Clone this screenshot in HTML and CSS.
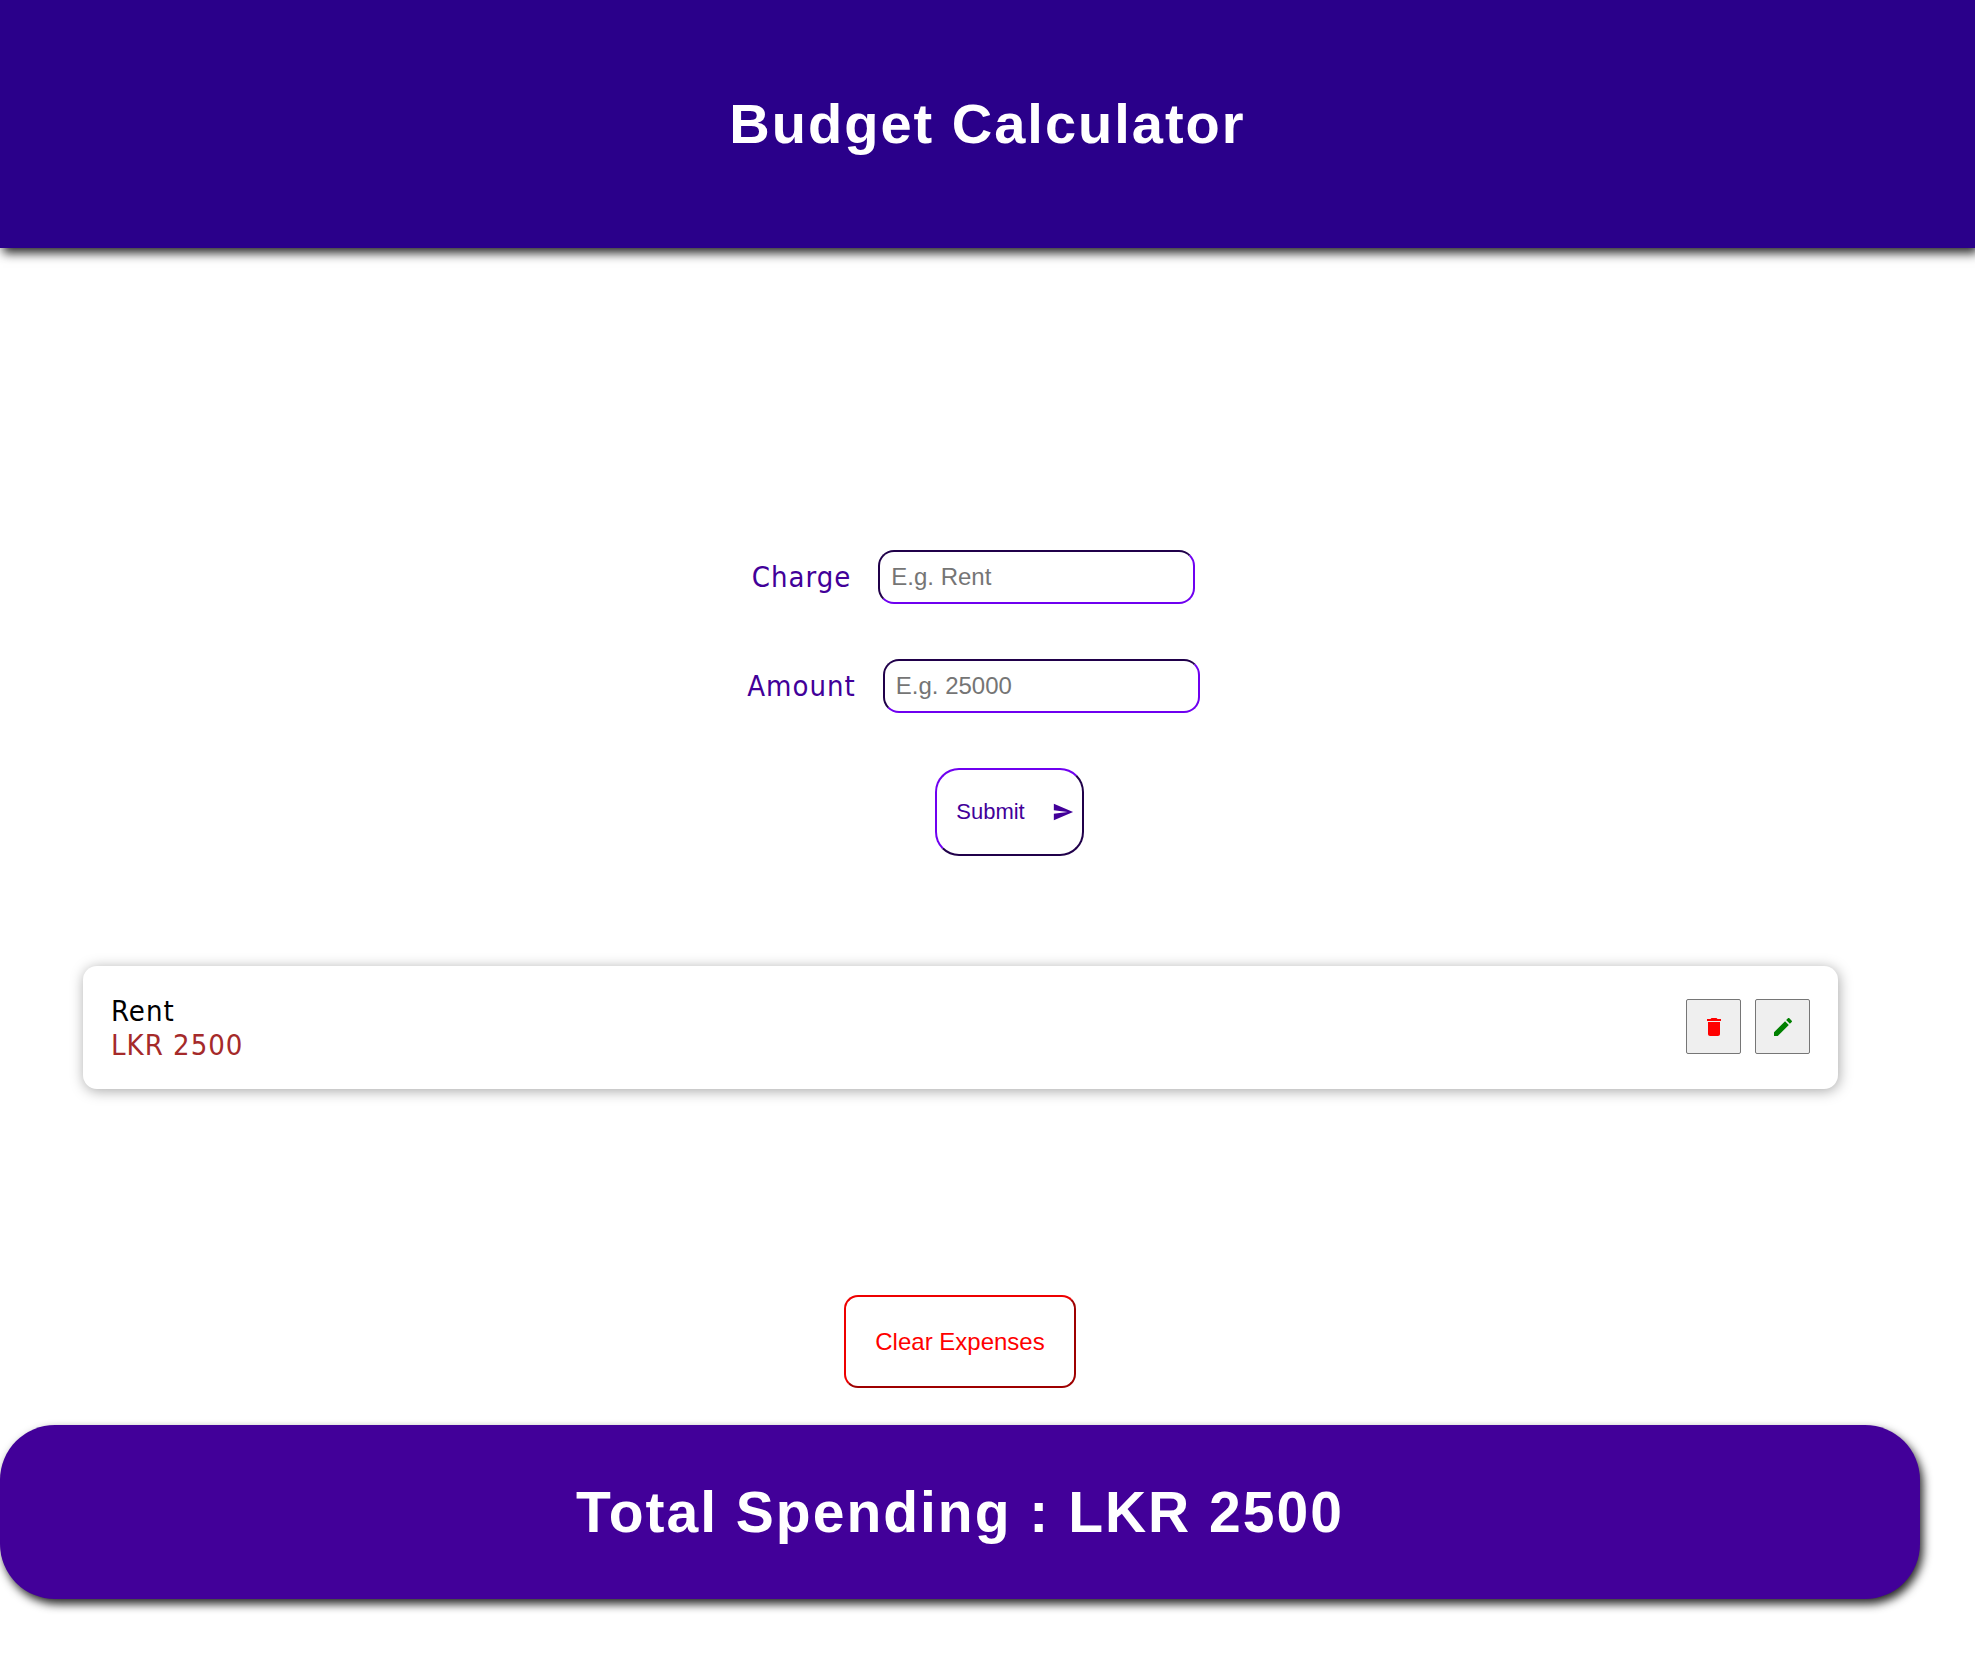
FILE: index.html
```html
<!DOCTYPE html>
<html lang="en">
<head>
  <meta charset="utf-8">
  <meta name="viewport" content="width=device-width, initial-scale=1">
  <title>Budget Calculator</title>
  <link rel="stylesheet" href="styles.css">
</head>
<body>
  <header class="header">
    <h1 class="title">Budget Calculator</h1>
  </header>
  <main class="main">
    <form class="form">
      <div class="field">
        <label for="charge">Charge</label>
        <input class="input" id="charge" type="text" placeholder="E.g. Rent">
      </div>
      <div class="field">
        <label for="amount">Amount</label>
        <input class="input" id="amount" type="text" inputmode="numeric" placeholder="E.g. 25000">
      </div>
      <button class="submit" type="submit">
        Submit
        <svg class="icon" viewBox="0 0 24 24" aria-hidden="true"><path d="M2.01 21L23 12 2.01 3 2 10l15 2-15 2z"/></svg>
      </button>
    </form>
    <ul class="expenses">
      <li class="expense">
        <div class="details">
          <span>Rent</span>
          <span class="cost">LKR 2500</span>
        </div>
        <div class="actions">
          <button class="action delete" type="button" aria-label="Delete">
            <svg class="action-icon" viewBox="0 0 24 24" aria-hidden="true"><path d="M6 19c0 1.1.9 2 2 2h8c1.1 0 2-.9 2-2V7H6v12zM19 4h-3.500l-1-1h-5l-1 1H5v2h14V4z"/></svg>
          </button>
          <button class="action edit" type="button" aria-label="Edit">
            <svg class="action-icon" viewBox="0 0 24 24" aria-hidden="true"><path d="M3 17.250V21h3.750L17.810 9.940l-3.750-3.750L3 17.250zM20.710 7.040c.39-.39.39-1.020 0-1.410l-2.340-2.340c-.39-.39-1.020-.39-1.410 0l-1.830 1.830 3.750 3.750 1.830-1.830z"/></svg>
          </button>
        </div>
      </li>
    </ul>
    <button class="clear" type="button">Clear Expenses</button>
  </main>
  <footer class="total">
    <h2 class="total-text">Total Spending : LKR 2500</h2>
  </footer>
</body>
</html>
```
FILE: styles.css
```css
* {
  box-sizing: border-box;
}

body {
  margin: 0;
  background: #fff;
  font-family: Tahoma, "DejaVu Sans Condensed", "DejaVu Sans", sans-serif;
  font-size: 29px;
  line-height: 34px;
  letter-spacing: 1px;
}

button,
input {
  font-family: Arial, "Liberation Sans", sans-serif;
}

.header {
  padding: 92px 0;
  background: #2a008a;
  text-align: center;
  box-shadow: 3px 5px 10px rgba(0, 0, 0, 0.85);
}

.title,
.total-text {
  margin: 0;
  color: #fff;
  font-family: Arial, "Liberation Sans", sans-serif;
  font-weight: bold;
  line-height: 64px;
  letter-spacing: 2px;
}

.title {
  font-size: 56px;
}

.total-text {
  font-size: 57px;
}

.main {
  display: flex;
  flex-direction: column;
  align-items: center;
}

.form {
  display: flex;
  flex-direction: column;
  align-items: center;
  gap: 55px;
  margin-top: 302px;
  color: #420099;
}

.field {
  display: flex;
  align-items: center;
  gap: 27px;
  margin-right: 28px;
}

.input {
  width: 317px;
  height: 54px;
  padding: 0 11px;
  border: 2px solid;
  border-color: #20004a #6f00f0 #6f00f0 #20004a;
  border-radius: 16px;
  background: #fff;
  font-size: 24px;
}

.input::placeholder {
  color: #757575;
}

.icon {
  width: 22px;
  height: 22px;
  fill: currentColor;
}

.submit {
  display: flex;
  align-items: center;
  gap: 27px;
  height: 88px;
  margin-left: 44px;
  padding: 0 8px 0 19px;
  border: 2px solid;
  border-color: #6f00f0 #20004a #20004a #6f00f0;
  border-radius: 24px;
  background: #fff;
  color: #420099;
  font-size: 22px;
}

.expenses {
  align-self: stretch;
  margin: 110px 137px 0 83px;
  padding: 0;
  list-style: none;
}

.expense {
  display: flex;
  align-items: flex-start;
  justify-content: space-between;
  padding: 28px 28px 27px;
  border-radius: 14px;
  box-shadow: 1px 2px 14px rgba(0, 0, 0, 0.35);
}

.details {
  display: flex;
  flex-direction: column;
}

.cost {
  color: brown;
}

.actions {
  display: flex;
  gap: 14px;
  padding-top: 5px;
}

.action {
  display: flex;
  align-items: center;
  justify-content: center;
  width: 55px;
  height: 55px;
  padding: 0;
  border: 1px solid #767676;
  border-radius: 2px;
  background: #efefef;
}

.action-icon {
  width: 24px;
  height: 24px;
  fill: currentColor;
}

.delete {
  color: red;
}

.edit {
  color: green;
}

.clear {
  height: 93px;
  margin: 206px 55px 37px 0;
  padding: 0 29px;
  border: 2px solid;
  border-color: #ee0000 #9e0000 #9e0000 #ee0000;
  border-radius: 14px;
  background: #fff;
  color: red;
  font-size: 24px;
}

.total {
  margin: 0 55px 55px 0;
  padding: 55px 0;
  border-radius: 55px;
  background: #420099;
  text-align: center;
  box-shadow: 3px 5px 10px rgba(0, 0, 0, 0.85);
}
```
